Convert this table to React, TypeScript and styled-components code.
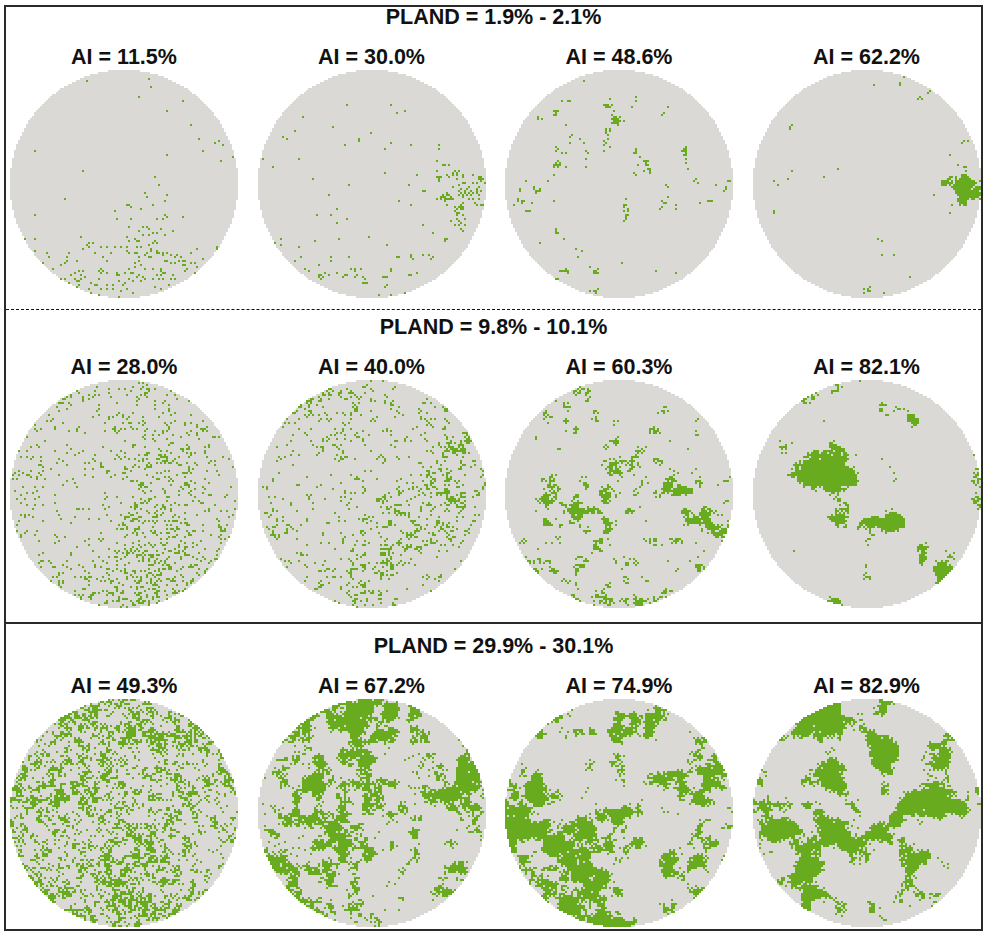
import { useMemo } from "react";
import styled, { createGlobalStyle } from "styled-components";

const GlobalStyle = createGlobalStyle`
    html, body {
        margin: 0;
        padding: 0;
        background: #ffffff;
    }
    body {
        font-family: "Liberation Sans", Arial, sans-serif;
    }
`

const GRID = 114;
const GREEN = '#69ab1e';
const GRAY = '#dad9d5';

// [x, y, radius, strength] in 0..1 disc coordinates: pulls habitat towards a spot
type Spot = [number, number, number, number];

type MapSpec = {
    ai: string,
    seed: number,
    white: number,
    smooth: number,
    scale: number,
    large: number,
    gx: number,
    gy: number,
    spots?: Spot[]
}

type PanelSpec = {
    title: string,
    pland: number,
    padTop: number,
    height: number,
    divider: 'none' | 'dashed' | 'solid',
    maps: MapSpec[]
}

const panels: PanelSpec[] = [
    {
        title: 'PLAND = 1.9% - 2.1%',
        pland: 0.02,
        padTop: 0,
        height: 302,
        divider: 'none',
        maps: [
            { ai: '11.5%', seed: 11, white: 1, smooth: 0, scale: 4, large: 0.4, gx: 0.2, gy: 0.6 },
            { ai: '30.0%', seed: 23, white: 1, smooth: 0.8, scale: 3, large: 0.5, gx: 0.4, gy: -0.1, spots: [[0.82, 0.5, 0.1, 1.4]] },
            { ai: '48.6%', seed: 37, white: 0.6, smooth: 1, scale: 5, large: 0.3, gx: 0, gy: 0, spots: [[0.48, 0.2, 0.05, 2]] },
            { ai: '62.2%', seed: 41, white: 0.35, smooth: 1, scale: 7, large: 0.3, gx: 0.1, gy: 0, spots: [[0.92, 0.52, 0.06, 2.6]] },
        ]
    },
    {
        title: 'PLAND = 9.8% - 10.1%',
        pland: 0.1,
        padTop: 7,
        height: 313,
        divider: 'dashed',
        maps: [
            { ai: '28.0%', seed: 53, white: 1, smooth: 0.35, scale: 3, large: 0.3, gx: 0, gy: 0, spots: [[0.68, 0.35, 0.03, 1.5]] },
            { ai: '40.0%', seed: 67, white: 1, smooth: 0.7, scale: 3.5, large: 0.4, gx: 0, gy: 0 },
            { ai: '60.3%', seed: 71, white: 0.55, smooth: 1, scale: 5, large: 0.5, gx: 0, gy: 0.5, spots: [[0.45, 0.95, 0.12, 1]] },
            {
                ai: '82.1%', seed: 83, white: 0.2, smooth: 0.8, scale: 14, large: 0.2, gx: 0, gy: 0,
                spots: [[0.3, 0.42, 0.11, 4], [0.55, 0.68, 0.09, 3.2], [0.72, 0.17, 0.035, 2.4], [0.82, 0.85, 0.05, 2]]
            },
        ]
    },
    {
        title: 'PLAND = 29.9% - 30.1%',
        pland: 0.3,
        padTop: 12,
        height: 307,
        divider: 'solid',
        maps: [
            { ai: '49.3%', seed: 97, white: 1, smooth: 0.75, scale: 3.5, large: 0.3, gx: 0, gy: 0 },
            {
                ai: '67.2%', seed: 101, white: 0.55, smooth: 1, scale: 6, large: 0.4, gx: 0, gy: 0,
                spots: [[0.53, 0.08, 0.12, 1.2], [0.93, 0.4, 0.1, 1.2]]
            },
            {
                ai: '74.9%', seed: 113, white: 0.4, smooth: 1, scale: 8, large: 0.4, gx: -0.4, gy: 0.2,
                spots: [[0.1, 0.45, 0.13, 1.6], [0.25, 0.82, 0.12, 1.4]]
            },
            {
                ai: '82.9%', seed: 127, white: 0.25, smooth: 1, scale: 13, large: 0.3, gx: 0, gy: 0,
                spots: [[0.17, 0.18, 0.1, 1.4], [0.88, 0.5, 0.1, 1.6], [0.33, 0.62, 0.1, 1.4]]
            },
        ]
    }
]

function mulberry32(seed: number) {
    let a = seed >>> 0;
    return () => {
        a = (a + 0x6d2b79f5) >>> 0;
        let t = a;
        t = Math.imul(t ^ (t >>> 15), t | 1);
        t ^= t + Math.imul(t ^ (t >>> 7), t | 61);
        return ((t ^ (t >>> 14)) >>> 0) / 4294967296;
    };
}

function gauss(rand: () => number) {
    const u = 1 - rand(), v = rand();
    return Math.sqrt(-2 * Math.log(u)) * Math.cos(2 * Math.PI * v);
}

function valueNoise(n: number, scale: number, rand: () => number) {
    const gw = Math.ceil(n / scale) + 2;
    const grid = Array.from({ length: gw * gw }, () => rand());
    const out = new Float32Array(n * n);
    const ease = (t: number) => t * t * (3 - 2 * t);
    for (let y = 0; y < n; y++) {
        for (let x = 0; x < n; x++) {
            const fx = x / scale, fy = y / scale;
            const ix = Math.floor(fx), iy = Math.floor(fy);
            const tx = ease(fx - ix), ty = ease(fy - iy);
            const a = grid[iy * gw + ix], b = grid[iy * gw + ix + 1];
            const c = grid[(iy + 1) * gw + ix], d = grid[(iy + 1) * gw + ix + 1];
            out[y * n + x] = (a + (b - a) * tx) * (1 - ty) + (c + (d - c) * tx) * ty;
        }
    }
    return out;
}

// a few octaves so the patch edges come out ragged
function fbm(n: number, scale: number, rand: () => number) {
    const out = new Float32Array(n * n);
    let s = scale, w = 1;
    while (s >= 1.5 && w > 0.1) {
        const layer = valueNoise(n, s, rand);
        for (let i = 0; i < out.length; i++) out[i] += layer[i] * w;
        s /= 2;
        w *= 0.5;
    }
    return out;
}

// rescale to zero mean, unit variance
function zscore(a: Float32Array) {
    let m = 0;
    for (let i = 0; i < a.length; i++) m += a[i];
    m /= a.length;
    let s = 0;
    for (let i = 0; i < a.length; i++) s += (a[i] - m) ** 2;
    s = Math.sqrt(s / a.length) || 1;
    for (let i = 0; i < a.length; i++) a[i] = (a[i] - m) / s;
    return a;
}

function inside(x: number, y: number) {
    const r = GRID / 2;
    const dx = x + 0.5 - r, dy = y + 0.5 - r;
    return dx * dx + dy * dy <= r * r;
}

// noise field thresholded so that `pland` of the disc is habitat
function buildPaths(spec: MapSpec, pland: number) {
    const rand = mulberry32(spec.seed * 7919);
    const n = GRID;
    const smooth = zscore(fbm(n, spec.scale, rand));
    const large = zscore(valueNoise(n, 34, rand));
    const field = new Float32Array(n * n);
    const values: number[] = [];
    for (let y = 0; y < n; y++) {
        for (let x = 0; x < n; x++) {
            const i = y * n + x;
            const px = (x + 0.5) / n, py = (y + 0.5) / n;
            let f = spec.white * gauss(rand)
                + spec.smooth * smooth[i]
                + spec.large * large[i]
                + spec.gx * (px * 2 - 1) + spec.gy * (py * 2 - 1);
            for (const [sx, sy, r, k] of spec.spots ?? []) {
                const d2 = (px - sx) ** 2 + (py - sy) ** 2;
                f += k * Math.exp(-d2 / (2 * r * r));
            }
            field[i] = f;
            if (inside(x, y)) values.push(f);
        }
    }
    values.sort((a, b) => b - a);
    const cut = values[Math.floor(values.length * pland)];

    let gray = '';
    let green = '';
    for (let y = 0; y < n; y++) {
        let start = -1, end = -1;
        for (let x = 0; x < n; x++) {
            if (inside(x, y)) {
                if (start < 0) start = x;
                end = x;
            }
        }
        if (start >= 0) gray += `M${start} ${y}h${end - start + 1}v1h-${end - start + 1}z`;
        let run = -1;
        for (let x = 0; x <= n; x++) {
            const on = x < n && inside(x, y) && field[y * n + x] > cut;
            if (on && run < 0) run = x;
            if (!on && run >= 0) {
                green += `M${run} ${y}h${x - run}v1h-${x - run}z`;
                run = -1;
            }
        }
    }
    return { gray, green };
}

const Frame = styled.div`
    margin: 5px 0 0 4px;
    width: 975px;
    border: 2px solid #2a2a2a;
    color: #111;
`

const PanelStyles = styled.section<{ $padTop: number, $height: number, $divider: string }>`
    box-sizing: border-box;
    height: ${p => p.$height}px;
    padding-top: ${p => p.$padTop}px;
    border-top: ${p => p.$divider === 'dashed' ? '1px dashed #111' : p.$divider === 'solid' ? '2px solid #2a2a2a' : 'none'};
    display: flex;
    flex-direction: column;
    align-items: center;
`

const Title = styled.h2`
    margin: 0;
    font-size: 21.5px;
    line-height: 20px;
    font-weight: 700;
`

const MapRow = styled.div`
    align-self: stretch;
    display: flex;
    gap: 19.5px;
    padding-left: 4px;
    margin-top: 18px;
`

const MapColumn = styled.figure`
    margin: 0;
    width: 228px;
    display: flex;
    flex-direction: column;
    align-items: center;
`

const Label = styled.figcaption`
    font-size: 21.5px;
    line-height: 24px;
    font-weight: 700;
    margin-bottom: 1px;
`

const MapSvg = styled.svg`
    display: block;
    width: 228px;
    height: 228px;
    shape-rendering: crispEdges;
`

function PatchMap(props: { spec: MapSpec, pland: number }) {
    const { gray, green } = useMemo(() => buildPaths(props.spec, props.pland), [props.spec, props.pland]);
    return (
        <MapColumn>
            <Label>AI = {props.spec.ai}</Label>
            <MapSvg viewBox={`0 0 ${GRID} ${GRID}`}>
                <path d={gray} fill={GRAY} />
                <path d={green} fill={GREEN} />
            </MapSvg>
        </MapColumn>
    )
}

export default function App() {
    return (
        <>
            <GlobalStyle />
            <Frame>
                {panels.map(p => (
                    <PanelStyles key={p.title} $padTop={p.padTop} $height={p.height} $divider={p.divider}>
                        <Title>{p.title}</Title>
                        <MapRow>
                            {p.maps.map(m => (
                                <PatchMap key={m.ai} spec={m} pland={p.pland} />
                            ))}
                        </MapRow>
                    </PanelStyles>
                ))}
            </Frame>
        </>
    )
}
